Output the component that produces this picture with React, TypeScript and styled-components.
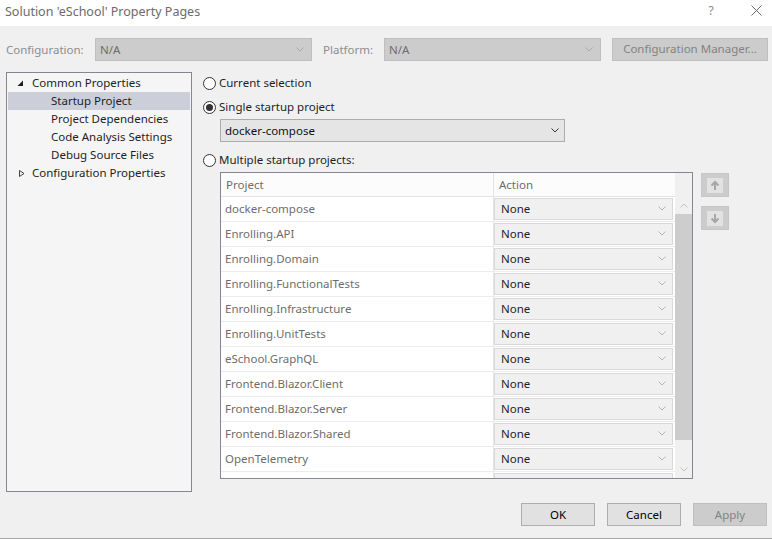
import React from 'react';
import styled, { createGlobalStyle } from 'styled-components';

const Global = createGlobalStyle`
  html, body { margin: 0; padding: 0; background: #f0f0f0; }
  body {
    font-family: "Noto Sans", "Open Sans", sans-serif;
    font-size: 11.5px;
    color: #1e1e1e;
  }
  * { box-sizing: border-box; }
`;

const Window = styled.div`
  width: 772px;
  height: 539px;
  display: flex;
  flex-direction: column;
  background: #f0f0f0;
  border-bottom: 1px solid #a5a5a5;
  overflow: hidden;
`;

const TitleBar = styled.div`
  height: 26px;
  flex: none;
  background: #ffffff;
  display: flex;
  align-items: flex-start;
  padding-left: 5px;
`;

const Title = styled.div`
  flex: 1;
  font-size: 12.5px;
  line-height: 24px;
  color: #6b6b6b;
`;

const TitleButton = styled.div<{ $mr?: number; $ml?: number }>`
  width: 30px;
  height: 20px;
  display: flex;
  align-items: center;
  justify-content: center;
  color: #8a8a8a;
  font-size: 12px;
  margin-right: ${p => p.$mr ?? 0}px;
  margin-left: ${p => p.$ml ?? 0}px;
`;

const ConfigRow = styled.div`
  display: flex;
  align-items: center;
  margin-top: 12px;
  height: 23px;
  padding-left: 6px;
  flex: none;
`;

const FieldLabel = styled.div<{ $w: number; $ml?: number }>`
  width: ${p => p.$w}px;
  margin-left: ${p => p.$ml ?? 0}px;
  color: #8d8d8d;
  flex: none;
  padding-bottom: 1px;
`;

const DisabledSelect = styled.div`
  width: 217px;
  height: 23px;
  flex: none;
  background: #cccccc;
  border: 1px solid #bfbfbf;
  display: flex;
  align-items: center;
  justify-content: space-between;
  padding: 0 7px 1px 4px;
  color: #6d6d6d;
`;

const DisabledButton = styled.div<{ $w: number; $ml?: number }>`
  width: ${p => p.$w}px;
  margin-left: ${p => p.$ml ?? 0}px;
  height: 23px;
  flex: none;
  background: #cccccc;
  border: 1px solid #bfbfbf;
  color: #838383;
  display: flex;
  align-items: center;
  justify-content: center;
  padding-bottom: 2px;
`;

const Main = styled.div`
  display: flex;
  margin-top: 11px;
  padding-left: 6px;
  height: 420px;
  flex: none;
`;

const Tree = styled.div`
  width: 186px;
  height: 420px;
  flex: none;
  background: #f5f5f5;
  border: 1px solid #828790;
  padding: 1px;
`;

const TreeRow = styled.div<{ $level: number; $selected?: boolean }>`
  height: 18px;
  display: flex;
  align-items: center;
  position: relative;
  padding-left: ${p => (p.$level === 0 ? 24 : 43)}px;
  padding-bottom: 2px;
  background: ${p => (p.$selected ? '#ccceda' : 'transparent')};
  color: #1e1e1e;
  white-space: nowrap;
`;

const Toggle = styled.span<{ $left: number }>`
  position: absolute;
  left: ${p => p.$left}px;
  top: 6px;
  display: flex;
`;

const RightPanel = styled.div`
  margin-left: 11px;
  display: flex;
  flex-direction: column;
  padding-top: 1px;
`;

const RadioRow = styled.div<{ $mt: number }>`
  height: 20px;
  margin-top: ${p => p.$mt}px;
  display: flex;
  align-items: center;
  color: #1e1e1e;
`;

const RadioText = styled.span`
  padding-bottom: 2px;
`;

const RadioCircle = styled.span<{ $checked?: boolean }>`
  width: 13px;
  height: 13px;
  border-radius: 50%;
  border: 1px solid #333333;
  background: #ffffff;
  margin-right: 3px;
  display: flex;
  align-items: center;
  justify-content: center;
  &::after {
    content: '';
    width: 7px;
    height: 7px;
    border-radius: 50%;
    background: ${p => (p.$checked ? '#333333' : 'transparent')};
  }
`;

const ProjectSelect = styled.div`
  margin-top: 2px;
  margin-left: 17px;
  width: 345px;
  height: 23px;
  background: #e5e5e5;
  border: 1px solid #acacac;
  display: flex;
  align-items: center;
  justify-content: space-between;
  padding: 0 5px 1px 4px;
  color: #111111;
`;

const GridArea = styled.div`
  display: flex;
  margin-top: 2px;
  margin-left: 17px;
  align-items: flex-start;
`;

const Grid = styled.div`
  width: 473px;
  height: 307px;
  border: 1px solid #828790;
  display: flex;
  background: #ffffff;
`;

const GridContent = styled.div`
  width: 454px;
  display: flex;
  flex-direction: column;
  overflow: hidden;
`;

const GridHeader = styled.div`
  height: 24px;
  flex: none;
  display: flex;
  background: #fcfcfc;
  border-bottom: 1px solid #e3e3e3;
`;

const HeaderCell = styled.div<{ $w: number; $sep?: boolean }>`
  width: ${p => p.$w}px;
  flex: none;
  display: flex;
  align-items: center;
  padding-left: 5px;
  padding-bottom: 1px;
  color: #6d6d6d;
  border-right: ${p => (p.$sep ? '1px solid #e3e3e3' : 'none')};
`;

const GridRow = styled.div`
  height: 25px;
  flex: none;
  display: flex;
  border-bottom: 1px solid #ececec;
`;

const NameCell = styled.div`
  width: 273px;
  flex: none;
  display: flex;
  align-items: center;
  padding-left: 4px;
  padding-bottom: 1px;
  color: #6d6d6d;
  border-right: 1px solid #e6e6e6;
  white-space: nowrap;
`;

const ActionCell = styled.div`
  flex: 1;
  padding: 1px 2px 1px 0;
`;

const ActionSelect = styled.div`
  height: 22px;
  background: #f0f0f0;
  border: 1px solid #d9d9d9;
  display: flex;
  align-items: center;
  justify-content: space-between;
  padding: 0 6px 1px 6px;
  color: #1e1e1e;
`;

const ScrollBar = styled.div`
  width: 17px;
  flex: none;
  background: #f0f0f0;
  display: flex;
  flex-direction: column;
  padding-top: 24px;
`;

const ScrollArrow = styled.div`
  height: 17px;
  flex: none;
  display: flex;
  align-items: center;
  justify-content: center;
`;

const ScrollThumb = styled.div`
  height: 226px;
  flex: none;
  background: #cdcdcd;
`;

const ScrollTrack = styled.div`
  flex: 1;
`;

const MoveButtons = styled.div`
  margin-left: 8px;
  margin-top: 1px;
  display: flex;
  flex-direction: column;
  gap: 9px;
`;

const MoveButton = styled.div`
  width: 28px;
  height: 24px;
  background: #cccccc;
  border: 1px solid #c6c6c6;
  display: flex;
  align-items: center;
  justify-content: center;
`;

const Footer = styled.div`
  display: flex;
  justify-content: flex-end;
  gap: 12px;
  margin-top: 11px;
  padding-right: 5px;
  flex: none;
`;

const DialogButton = styled.div<{ $disabled?: boolean }>`
  width: 74px;
  height: 23px;
  background: ${p => (p.$disabled ? '#cccccc' : '#e1e1e1')};
  border: 1px solid ${p => (p.$disabled ? '#bfbfbf' : '#adadad')};
  color: ${p => (p.$disabled ? '#838383' : '#000000')};
  display: flex;
  align-items: center;
  justify-content: center;
  padding-bottom: 1px;
`;

const Chevron = ({ color, up }: { color: string; up?: boolean }) => (
  <svg width="8" height="5" viewBox="0 0 8 5" style={{ display: 'block' }}>
    <path
      d={up ? 'M0.5 4.5 L4 1 L7.5 4.5' : 'M0.5 0.5 L4 4 L7.5 0.5'}
      fill="none"
      stroke={color}
      strokeWidth="1"
    />
  </svg>
);

const ArrowIcon = ({ down }: { down?: boolean }) => (
  <svg width="16" height="15" viewBox="0 0 16 15" style={{ display: 'block' }}>
    <rect x="0" y="0" width="16" height="15" fill="#e2e2e2" />
    {down ? (
      <path d="M8 3 V11 M4.5 7.5 L8 11 L11.5 7.5" fill="none" stroke="#a6a6a6" strokeWidth="2" />
    ) : (
      <path d="M8 12 V4 M4.5 7.5 L8 4 L11.5 7.5" fill="none" stroke="#a6a6a6" strokeWidth="2" />
    )}
  </svg>
);

const projects = [
  'docker-compose',
  'Enrolling.API',
  'Enrolling.Domain',
  'Enrolling.FunctionalTests',
  'Enrolling.Infrastructure',
  'Enrolling.UnitTests',
  'eSchool.GraphQL',
  'Frontend.Blazor.Client',
  'Frontend.Blazor.Server',
  'Frontend.Blazor.Shared',
  'OpenTelemetry',
];

export default function App() {
  return (
    <>
      <Global />
      <Window>
        <TitleBar>
          <Title>Solution 'eSchool' Property Pages</Title>
          <TitleButton>?</TitleButton>
          <TitleButton $mr={1} $ml={15}>
            <svg width="11" height="11" viewBox="0 0 11 11" style={{ display: 'block' }}>
              <path d="M0.5 0.5 L10.5 10.5 M10.5 0.5 L0.5 10.5" stroke="#6b6b6b" strokeWidth="1" />
            </svg>
          </TitleButton>
        </TitleBar>

        <ConfigRow>
          <FieldLabel $w={89}>Configuration:</FieldLabel>
          <DisabledSelect>
            <span>N/A</span>
            <Chevron color="#a8a8a8" />
          </DisabledSelect>
          <FieldLabel $w={61} $ml={11}>Platform:</FieldLabel>
          <DisabledSelect>
            <span>N/A</span>
            <Chevron color="#a8a8a8" />
          </DisabledSelect>
          <DisabledButton $w={156} $ml={11}>Configuration Manager...</DisabledButton>
        </ConfigRow>

        <Main>
          <Tree>
            <TreeRow $level={0}>
              <Toggle $left={9}>
                <svg width="7" height="7" viewBox="0 0 7 7">
                  <path d="M6 0.5 L6 6 L0.5 6 Z" fill="#1e1e1e" />
                </svg>
              </Toggle>
              Common Properties
            </TreeRow>
            <TreeRow $level={1} $selected>Startup Project</TreeRow>
            <TreeRow $level={1}>Project Dependencies</TreeRow>
            <TreeRow $level={1}>Code Analysis Settings</TreeRow>
            <TreeRow $level={1}>Debug Source Files</TreeRow>
            <TreeRow $level={0}>
              <Toggle $left={11}>
                <svg width="6" height="7" viewBox="0 0 6 7">
                  <path d="M0.5 0.5 L5 3.5 L0.5 6.5 Z" fill="none" stroke="#404040" strokeWidth="1" />
                </svg>
              </Toggle>
              Configuration Properties
            </TreeRow>
          </Tree>

          <RightPanel>
            <RadioRow $mt={0}>
              <RadioCircle />
              <RadioText>Current selection</RadioText>
            </RadioRow>
            <RadioRow $mt={4}>
              <RadioCircle $checked />
              <RadioText>Single startup project</RadioText>
            </RadioRow>
            <ProjectSelect>
              <span>docker-compose</span>
              <Chevron color="#333333" />
            </ProjectSelect>
            <RadioRow $mt={8}>
              <RadioCircle />
              <RadioText>Multiple startup projects:</RadioText>
            </RadioRow>

            <GridArea>
              <Grid>
                <GridContent>
                  <GridHeader>
                    <HeaderCell $w={273} $sep>Project</HeaderCell>
                    <HeaderCell $w={181}>Action</HeaderCell>
                  </GridHeader>
                  {projects.map(name => (
                    <GridRow key={name}>
                      <NameCell>{name}</NameCell>
                      <ActionCell>
                        <ActionSelect>
                          <span>None</span>
                          <Chevron color="#b5b5b5" />
                        </ActionSelect>
                      </ActionCell>
                    </GridRow>
                  ))}
                  <GridRow>
                    <NameCell />
                    <ActionCell>
                      <ActionSelect />
                    </ActionCell>
                  </GridRow>
                </GridContent>
                <ScrollBar>
                  <ScrollArrow>
                    <Chevron color="#c2c2c2" up />
                  </ScrollArrow>
                  <ScrollThumb />
                  <ScrollTrack />
                  <ScrollArrow>
                    <Chevron color="#c2c2c2" />
                  </ScrollArrow>
                </ScrollBar>
              </Grid>
              <MoveButtons>
                <MoveButton>
                  <ArrowIcon />
                </MoveButton>
                <MoveButton>
                  <ArrowIcon down />
                </MoveButton>
              </MoveButtons>
            </GridArea>
          </RightPanel>
        </Main>

        <Footer>
          <DialogButton>OK</DialogButton>
          <DialogButton>Cancel</DialogButton>
          <DialogButton $disabled>Apply</DialogButton>
        </Footer>
      </Window>
    </>
  );
}
